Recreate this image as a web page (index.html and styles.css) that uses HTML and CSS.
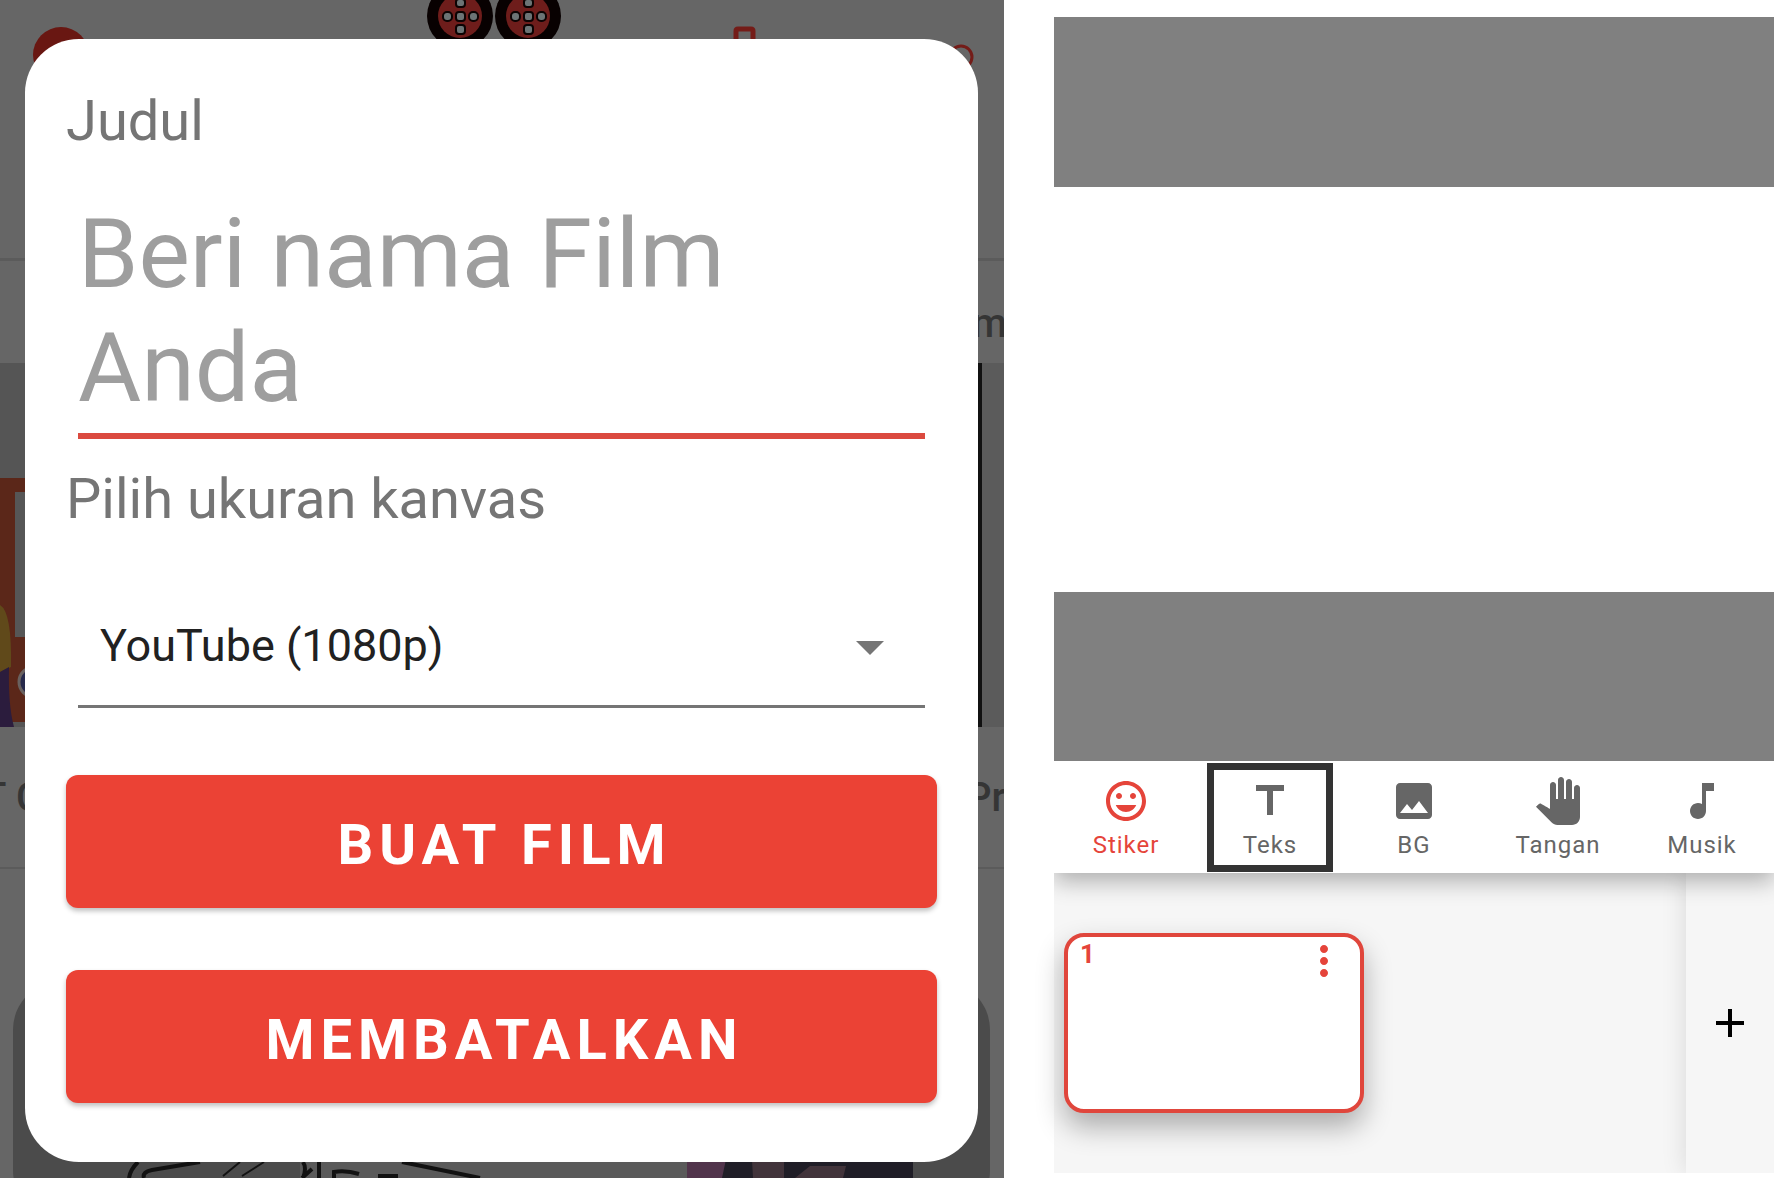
FILE: index.html
```html
<!DOCTYPE html>
<html lang="id">
<head>
    <meta charset="UTF-8">
    <meta name="viewport" content="width=device-width, initial-scale=1">
    <title>Buat Film</title>
    <link rel="stylesheet" href="styles.css">
</head>
<body>
    <main class="screens">
        <section class="home">
            <!-- dimmed home screen behind the dialog -->
            <svg class="backdrop" viewBox="0 0 1004 1178" preserveAspectRatio="xMidYMid slice" aria-hidden="true">
                <rect width="1004" height="1178" fill="#666"/>
                <rect y="258" width="1004" height="3" fill="#5b5b5b"/>
                <rect y="867" width="1004" height="2" fill="#5b5b5b"/>
                <circle cx="61" cy="55" r="28" fill="#691712"/>

                <!-- film reels -->
                <g id="reel">
                    <circle cx="460" cy="16" r="33" fill="#080101"/>
                    <circle cx="460" cy="16" r="22" fill="#6e1d1b"/>
                    <g fill="#6c7475" stroke="#0c0303" stroke-width="2">
                        <rect x="456" y="-1" width="9" height="8" rx="3"/>
                        <rect x="456" y="12" width="9" height="9" rx="3"/>
                        <rect x="456" y="25" width="9" height="9" rx="3"/>
                        <rect x="443" y="12" width="9" height="9" rx="4"/>
                        <rect x="469" y="12" width="9" height="9" rx="4"/>
                    </g>
                </g>
                <use href="#reel" x="68"/>
                <path d="M736 50V31q0-2 2-2h13q2 0 2 2v19" fill="none" stroke="#741c18" stroke-width="5"/>
                <circle cx="961" cy="57" r="11" fill="none" stroke="#741c18" stroke-width="3"/>

                <!-- thumbnails -->
                <rect y="363" width="200" height="364" fill="#555"/>
                <rect y="478" width="200" height="244" fill="#5b2719"/>
                <rect x="15" y="492" width="100" height="145" fill="#565656"/>
                <path d="M0 605Q12 612 11 667L0 672Z" fill="#60491a"/>
                <path d="M0 672L9 667Q8 705 14 727H0Z" fill="#2b1c3d"/>
                <circle cx="34" cy="682" r="15" fill="#27294b" stroke="#69615f" stroke-width="3"/>
                <rect x="970" y="363" width="12" height="364" fill="#111"/>
                <rect x="982" y="363" width="22" height="364" fill="#5b5b5b"/>
                <g class="backdrop-text">
                    <text x="972" y="337">m</text>
                    <text x="-18" y="811">T</text>
                    <text x="16" y="811">C</text>
                    <text x="966" y="811">Pr</text>
                </g>

                <!-- bottom card -->
                <rect x="13" y="980" width="977" height="240" rx="50" fill="#4b4b4b"/>
                <rect x="300" y="1150" width="500" height="28" fill="#5e5e5e" opacity=".8"/>
                <g fill="none" stroke="#121212" stroke-width="4">
                    <path d="M138 1162Q130 1170 129 1178M200 1162L152 1170Q142 1172 144 1178M303 1162q4 6 0 16m9-9l-10 9M319 1162v16M334 1178v-6q12-2 25 2M378 1176h20M402 1162L480 1178"/>
                    <path d="M240 1162L223 1176M264 1162L242 1176" stroke-width="2"/>
                </g>
                <rect x="687" y="1150" width="226" height="28" fill="#201e27"/>
                <path d="M687 1150h41l-6 28h-35Z" fill="#51344b"/>
                <path d="M752 1160h32v18h-31ZM810 1166h36l-3 12h-48Z" fill="#42343b"/>
            </svg>

            <form class="dialog">
                <label class="label" for="title">Judul</label>
                <textarea class="title-input" id="title" rows="2" placeholder="Beri nama Film Anda"></textarea>
                <label class="label" for="size">Pilih ukuran kanvas</label>
                <div class="select-box">
                    <select id="size">
                        <option>YouTube (1080p)</option>
                    </select>
                </div>
                <div class="actions">
                    <button type="button">BUAT FILM</button>
                    <button type="button">MEMBATALKAN</button>
                </div>
            </form>
        </section>

        <section class="editor">
            <div class="stage">
                <div class="canvas"></div>
            </div>

            <nav class="toolbar">
                <button class="tool active" type="button">
                    <svg viewBox="0 0 24 24"><path d="M11.99 2C6.47 2 2 6.48 2 12s4.47 10 9.99 10C17.52 22 22 17.52 22 12S17.52 2 11.99 2zM12 20c-4.42 0-8-3.58-8-8s3.58-8 8-8 8 3.58 8 8-3.58 8-8 8zm3.5-9c.83 0 1.5-.67 1.5-1.5S16.33 8 15.5 8 14 8.67 14 9.5s.67 1.5 1.5 1.5zm-7 0c.83 0 1.5-.67 1.5-1.5S9.33 8 8.5 8 7 8.67 7 9.5 7.67 11 8.5 11zm3.5 6.5c2.33 0 4.31-1.46 5.11-3.5H6.89c.8 2.04 2.78 3.5 5.11 3.5z"/></svg>
                    Stiker
                </button>
                <button class="tool boxed" type="button">
                    <svg viewBox="0 0 24 24"><path d="M5 4v3h5.5v12h3V7H19V4z"/></svg>
                    Teks
                </button>
                <button class="tool" type="button">
                    <svg viewBox="0 0 24 24"><path d="M21 19V5c0-1.1-.9-2-2-2H5c-1.1 0-2 .9-2 2v14c0 1.1.9 2 2 2h14c1.1 0 2-.9 2-2zM8.5 13.5l2.5 3.01L14.5 12l4.5 6H5l3.5-4.5z"/></svg>
                    BG
                </button>
                <button class="tool" type="button">
                    <svg viewBox="0 0 24 24"><path d="M23 5.5V20c0 2.2-1.8 4-4 4h-7.3c-1.08 0-2.1-.43-2.85-1.19L1 14.83s1.26-1.23 1.3-1.25c.22-.19.49-.29.79-.29.22 0 .42.06.6.16.04.01 4.31 2.46 4.31 2.46V4c0-.83.67-1.5 1.5-1.5S11 3.17 11 4v7h1V1.5c0-.83.67-1.5 1.5-1.5S15 .67 15 1.5V11h1V2.5c0-.83.67-1.5 1.5-1.5s1.5.67 1.5 1.5V11h1V5.5c0-.83.67-1.5 1.5-1.5s1.5.67 1.5 1.5z"/></svg>
                    Tangan
                </button>
                <button class="tool" type="button">
                    <svg viewBox="0 0 24 24"><path d="M12 3v10.55c-.59-.34-1.27-.55-2-.55-2.21 0-4 1.79-4 4s1.79 4 4 4 4-1.79 4-4V7h4V3h-6z"/></svg>
                    Musik
                </button>
            </nav>

            <div class="timeline">
                <div class="frames">
                    <div class="frame">
                        <span>1</span>
                        <button class="icon-button" type="button" aria-label="Menu">
                            <svg viewBox="0 0 24 24"><path d="M12 8c1.1 0 2-.9 2-2s-.9-2-2-2-2 .9-2 2 .9 2 2 2zm0 2c-1.1 0-2 .9-2 2s.9 2 2 2 2-.9 2-2-.9-2-2-2zm0 6c-1.1 0-2 .9-2 2s.9 2 2 2 2-.9 2-2-.9-2-2-2z"/></svg>
                        </button>
                    </div>
                </div>
                <button class="add-frame" type="button" aria-label="Tambah">
                    <svg viewBox="0 0 24 24"><path d="M19 13h-6v6h-2v-6H5v-2h6V5h2v6h6v2z"/></svg>
                </button>
            </div>
        </section>
    </main>
</body>
</html>
```
FILE: styles.css
```css
* {
    box-sizing: border-box;
}

body {
    margin: 0;
    background: #fff;
    font-family: Roboto, sans-serif;
}

button, select, textarea {
    font-family: inherit;
    border: none;
    border-radius: 0;
    background: none;
    margin: 0;
    padding: 0;
}

button {
    cursor: pointer;
}

svg {
    fill: currentColor;
}

.screens {
    display: grid;
    grid-template-columns: 1004fr 720fr;
    column-gap: 50px;
    min-height: 100vh;
}

/* home screen with dialog */
.home {
    position: relative;
    overflow: hidden;
    padding: 39px 26px 16px 25px;
}

.backdrop {
    position: absolute;
    top: 0;
    left: 0;
    width: 100%;
    height: 100%;
}

.backdrop-text {
    fill: #353535;
    font-size: 40px;
    font-weight: 500;
}

.dialog {
    position: relative;
    display: flex;
    flex-direction: column;
    background: #fff;
    border-radius: 54px;
    padding: 49px 41px 59px;
}

.label {
    font-size: 56px;
    line-height: 66px;
    color: #757575;
}

.title-input {
    display: block;
    height: 243px;
    margin: 42px 12px 27px;
    padding-top: 1px;
    border-bottom: 6px solid #db4a3f;
    font-size: 97px;
    line-height: 114px;
    color: #212121;
    resize: none;
    overflow: hidden;
    outline: none;
}

.title-input::placeholder {
    color: #9e9e9e;
}

.select-box {
    position: relative;
    margin: 54px 12px 67px;
}

.select-box::after {
    content: "";
    position: absolute;
    right: 41px;
    top: 55px;
    border: 14px solid transparent;
    border-top-color: #757575;
    border-bottom: none;
    pointer-events: none;
}

.select-box select {
    display: block;
    width: 100%;
    height: 122px;
    padding: 0 22px;
    appearance: none;
    border-bottom: 3px solid #757575;
    font-size: 45px;
    color: #212121;
}

.actions {
    display: flex;
    flex-direction: column;
    gap: 62px;
}

.actions button {
    height: 133px;
    padding: 6px 0 0 6px;
    border-radius: 12px;
    background: #eb4235;
    box-shadow: 0 3px 5px rgba(0, 0, 0, 0.25);
    color: #fff;
    font-size: 56px;
    font-weight: 700;
    letter-spacing: 6px;
}

/* editor */
.editor {
    display: flex;
    flex-direction: column;
    padding: 17px 0 5px;
}

.stage {
    padding: 170px 0 169px;
    background: #808080;
}

.canvas {
    aspect-ratio: 16 / 9;
    background: #fff;
}

.toolbar {
    position: relative;
    z-index: 1;
    display: grid;
    grid-template-columns: repeat(5, 1fr);
    justify-items: center;
    height: 112px;
    padding: 2px 0 1px;
    background: #fff;
    box-shadow: 0 8px 22px rgba(0, 0, 0, 0.3);
    clip-path: inset(0 0 -40px);
}

.tool {
    display: flex;
    flex-direction: column;
    align-items: center;
    justify-content: center;
    gap: 6px;
    width: 126px;
    border: 7px solid transparent;
    color: #666;
    font-size: 24px;
    line-height: 28px;
    letter-spacing: 1px;
}

.tool svg,
.icon-button svg,
.add-frame svg {
    display: block;
    width: 48px;
    height: 48px;
}

.tool.active {
    color: #e5443a;
}

.tool.boxed {
    border-color: #333;
}

.timeline {
    display: flex;
    flex: 1;
    background: #f6f6f6;
}

.frames {
    flex: 1;
    padding: 60px 10px;
}

.frame {
    display: flex;
    justify-content: space-between;
    align-items: flex-start;
    width: 300px;
    height: 180px;
    padding: 0 12px;
    border: 4px solid #e0463c;
    border-radius: 20px;
    background: #fff;
    box-shadow: 0 14px 28px rgba(0, 0, 0, 0.3);
    color: #e5443a;
    font-size: 26px;
    font-weight: 700;
    line-height: 34px;
}

.icon-button {
    color: inherit;
}

.add-frame {
    width: 88px;
    display: flex;
    align-items: center;
    justify-content: center;
    background: #f6f6f6;
    box-shadow: 0 0 24px rgba(0, 0, 0, 0.12);
    clip-path: inset(0 0 0 -40px);
    color: #000;
}
```
